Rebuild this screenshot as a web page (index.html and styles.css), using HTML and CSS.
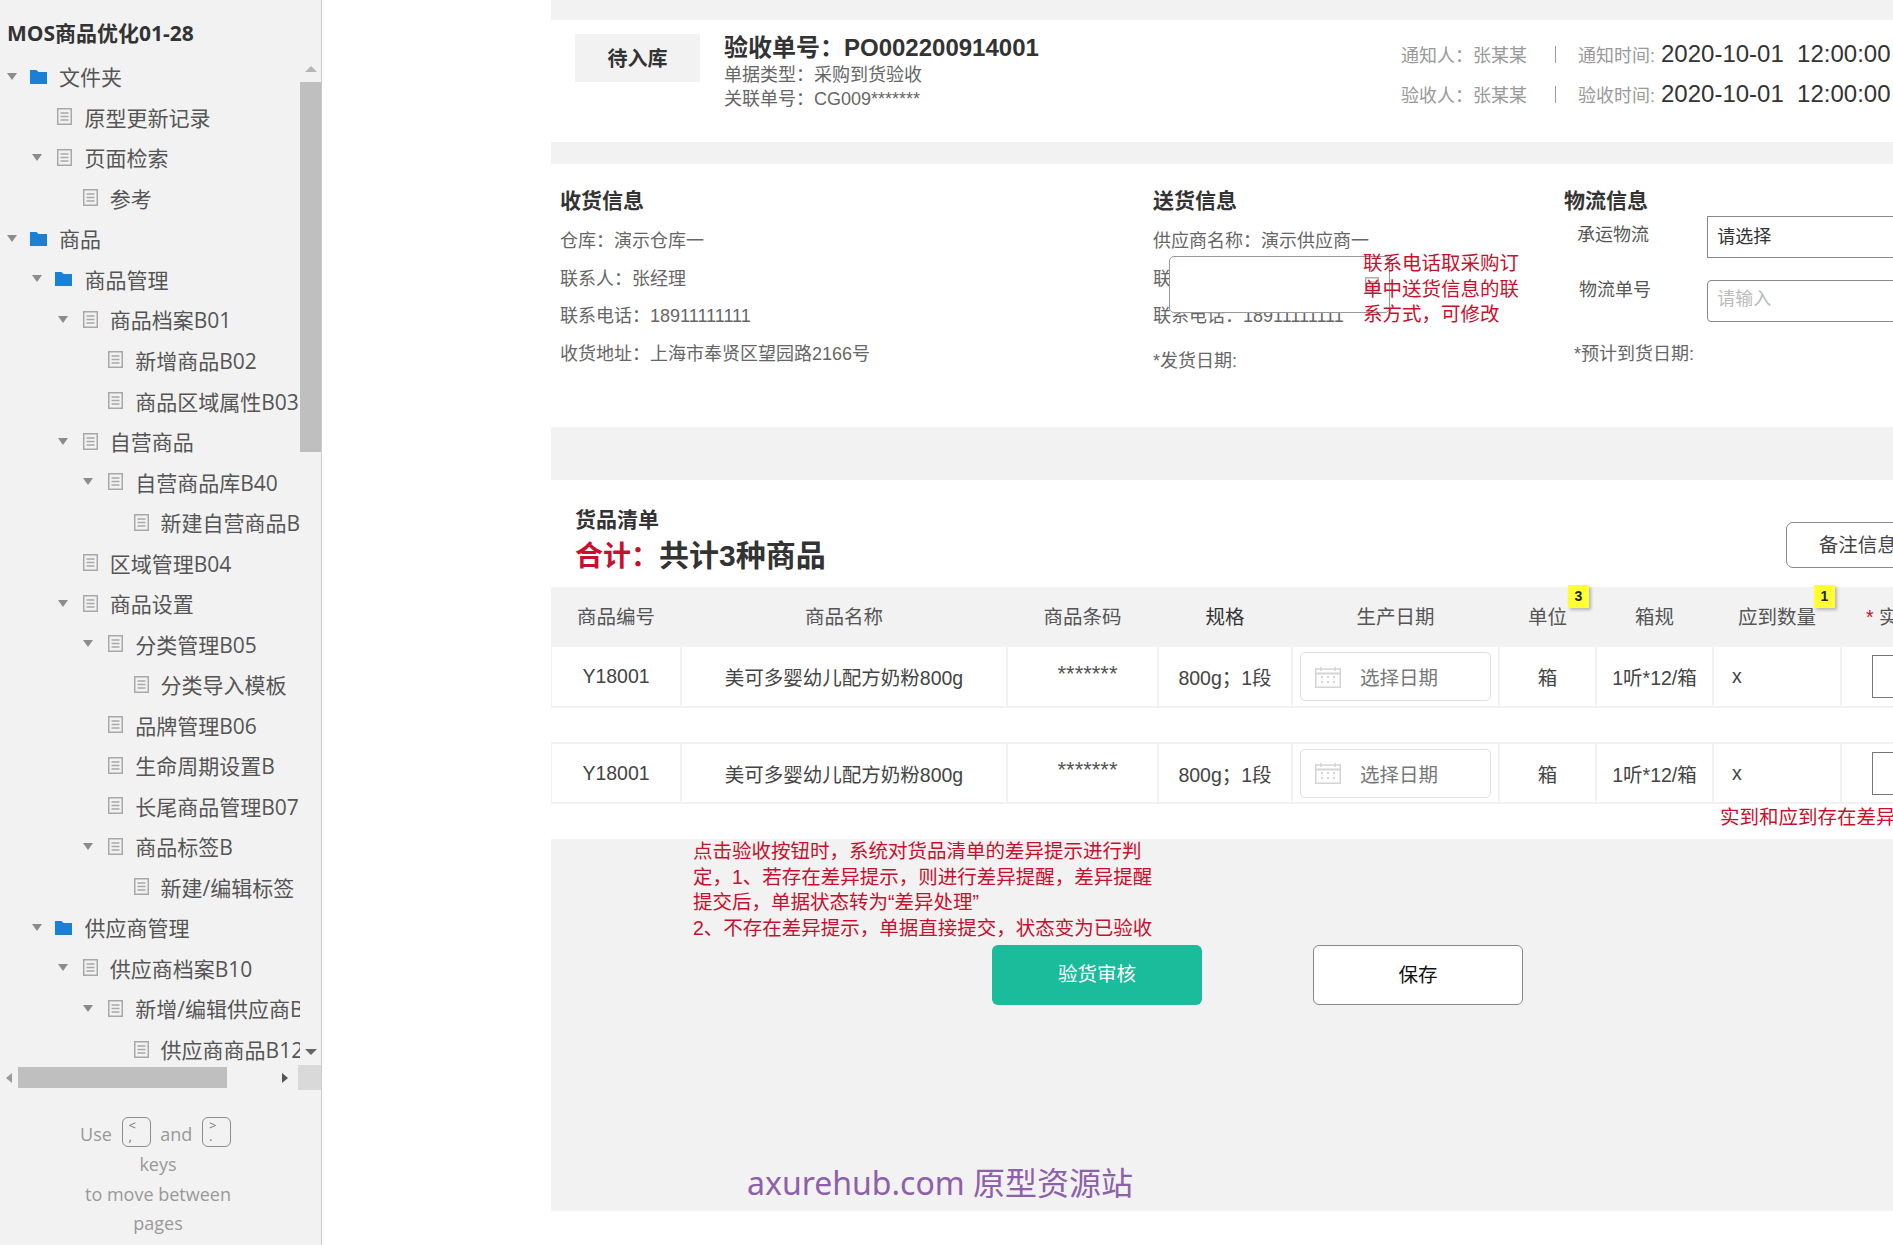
FILE: index.html
```html
<!DOCTYPE html>
<html>
	<head>
		<meta charset="utf-8">
		<link rel="stylesheet" href="styles.css">
	</head>
	<body>
		<svg class="sprite">
			<symbol id="docIcon" viewBox="0 0 15 17">
				<rect x="0.75" y="0.75" width="13.5" height="15.5" fill="none" stroke="#a8a8a8" stroke-width="1.5"/>
				<path d="M3.5 5h8M3.5 8.5h8M3.5 12h8" fill="none" stroke="#a8a8a8" stroke-width="1.3"/>
			</symbol>
			<symbol id="folderIcon" viewBox="0 0 17 15">
				<path d="M0 1h6.5l2 2H17v12H0z" fill="#1a80d6"/>
			</symbol>
			<symbol id="calIcon" viewBox="0 0 26 22">
				<rect x="0.75" y="3" width="24.5" height="18.25" fill="none" stroke="#d4d4d4" stroke-width="1.5"/>
				<path d="M1 7.5h24" stroke="#d4d4d4" stroke-width="2"/>
				<path d="M6 1v4M20 1v4" stroke="#d4d4d4" stroke-width="1.5"/>
				<path d="M6 11h2M12 11h2M18 11h2M6 16h2M12 16h2M18 16h2" stroke="#d4d4d4" stroke-width="2"/>
			</symbol>
		</svg>

		<aside class="sidebar">
			<div class="sideTitle">MOS商品优化01-28</div>

			<div class="treeBox">
				<div class="tree">
					<div class="treeRow lv0"><i class="arrow"></i><svg class="folderIco"><use href="#folderIcon"/></svg><span>文件夹</span></div>
					<div class="treeRow lv1"><i class="noArrow"></i><svg class="docIco"><use href="#docIcon"/></svg><span>原型更新记录</span></div>
					<div class="treeRow lv1"><i class="arrow"></i><svg class="docIco"><use href="#docIcon"/></svg><span>页面检索</span></div>
					<div class="treeRow lv2"><i class="noArrow"></i><svg class="docIco"><use href="#docIcon"/></svg><span>参考</span></div>
					<div class="treeRow lv0"><i class="arrow"></i><svg class="folderIco"><use href="#folderIcon"/></svg><span>商品</span></div>
					<div class="treeRow lv1"><i class="arrow"></i><svg class="folderIco"><use href="#folderIcon"/></svg><span>商品管理</span></div>
					<div class="treeRow lv2"><i class="arrow"></i><svg class="docIco"><use href="#docIcon"/></svg><span>商品档案B01</span></div>
					<div class="treeRow lv3"><i class="noArrow"></i><svg class="docIco"><use href="#docIcon"/></svg><span>新增商品B02</span></div>
					<div class="treeRow lv3"><i class="noArrow"></i><svg class="docIco"><use href="#docIcon"/></svg><span>商品区域属性B03</span></div>
					<div class="treeRow lv2"><i class="arrow"></i><svg class="docIco"><use href="#docIcon"/></svg><span>自营商品</span></div>
					<div class="treeRow lv3"><i class="arrow"></i><svg class="docIco"><use href="#docIcon"/></svg><span>自营商品库B40</span></div>
					<div class="treeRow lv4"><i class="noArrow"></i><svg class="docIco"><use href="#docIcon"/></svg><span>新建自营商品B</span></div>
					<div class="treeRow lv2"><i class="noArrow"></i><svg class="docIco"><use href="#docIcon"/></svg><span>区域管理B04</span></div>
					<div class="treeRow lv2"><i class="arrow"></i><svg class="docIco"><use href="#docIcon"/></svg><span>商品设置</span></div>
					<div class="treeRow lv3"><i class="arrow"></i><svg class="docIco"><use href="#docIcon"/></svg><span>分类管理B05</span></div>
					<div class="treeRow lv4"><i class="noArrow"></i><svg class="docIco"><use href="#docIcon"/></svg><span>分类导入模板</span></div>
					<div class="treeRow lv3"><i class="noArrow"></i><svg class="docIco"><use href="#docIcon"/></svg><span>品牌管理B06</span></div>
					<div class="treeRow lv3"><i class="noArrow"></i><svg class="docIco"><use href="#docIcon"/></svg><span>生命周期设置B</span></div>
					<div class="treeRow lv3"><i class="noArrow"></i><svg class="docIco"><use href="#docIcon"/></svg><span>长尾商品管理B07</span></div>
					<div class="treeRow lv3"><i class="arrow"></i><svg class="docIco"><use href="#docIcon"/></svg><span>商品标签B</span></div>
					<div class="treeRow lv4"><i class="noArrow"></i><svg class="docIco"><use href="#docIcon"/></svg><span>新建/编辑标签</span></div>
					<div class="treeRow lv1"><i class="arrow"></i><svg class="folderIco"><use href="#folderIcon"/></svg><span>供应商管理</span></div>
					<div class="treeRow lv2"><i class="arrow"></i><svg class="docIco"><use href="#docIcon"/></svg><span>供应商档案B10</span></div>
					<div class="treeRow lv3"><i class="arrow"></i><svg class="docIco"><use href="#docIcon"/></svg><span>新增/编辑供应商B</span></div>
					<div class="treeRow lv4"><i class="noArrow"></i><svg class="docIco"><use href="#docIcon"/></svg><span>供应商商品B12</span></div>
				</div>
				<div class="vBar">
					<div class="vBarEnd"><i class="triUp"></i></div>
					<div class="vThumb"></div>
					<div class="vBarFill"></div>
					<div class="vBarEnd"><i class="triDown"></i></div>
				</div>
			</div>

			<div class="hBar">
				<div class="hBarEnd"><i class="triLeft"></i></div>
				<div class="hThumb"></div>
				<div class="hBarFill"></div>
				<div class="hBarEnd"><i class="triRight"></i></div>
				<div class="hBarCorner"></div>
			</div>

			<div class="sideHint">
				<div>Use <span class="keyCap">&lt;<br>,</span> and <span class="keyCap">&gt;<br>.</span></div>
				<div>keys</div>
				<div>to move between</div>
				<div>pages</div>
			</div>
		</aside>

		<main class="main">
			<div class="page">
				<div class="band bandTop"></div>

				<section class="head">
					<div class="statusTag">待入库</div>
					<div class="headInfo">
						<div class="orderNo">验收单号：PO002200914001</div>
						<div class="orderSub">单据类型：采购到货验收</div>
						<div class="orderSub">关联单号：CG009*******</div>
					</div>
					<div class="headMeta">
						<div class="metaRow">
							<span class="metaWho">通知人：张某某</span>
							<span class="metaSep"></span>
							<span class="metaLabel">通知时间:</span>
							<span class="metaTime">2020-10-01&nbsp;&nbsp;12:00:00</span>
						</div>
						<div class="metaRow">
							<span class="metaWho">验收人：张某某</span>
							<span class="metaSep"></span>
							<span class="metaLabel">验收时间:</span>
							<span class="metaTime">2020-10-01&nbsp;&nbsp;12:00:00</span>
						</div>
					</div>
				</section>

				<div class="band bandMid"></div>

				<section class="info">
					<div class="infoCol colReceive">
						<h3 class="blockTitle">收货信息</h3>
						<div class="infoLines">
							<div>仓库：演示仓库一</div>
							<div>联系人：张经理</div>
							<div>联系电话：18911111111</div>
							<div>收货地址：上海市奉贤区望园路2166号</div>
						</div>
					</div>
					<div class="infoCol colSend">
						<h3 class="blockTitle">送货信息</h3>
						<div class="infoLines">
							<div>供应商名称：演示供应商一</div>
							<div>联系人：</div>
							<div>联系电话：18911111111</div>
							<div class="sendDate">*发货日期:</div>
						</div>
					</div>
					<div class="infoCol colShip">
						<h3 class="blockTitle">物流信息</h3>
						<div class="shipRow">
							<label class="shipLabel">承运物流</label>
							<div class="shipSelect">请选择</div>
						</div>
						<div class="shipRow shipRowNo">
							<label class="shipLabel">物流单号</label>
							<div class="shipInput">请输入</div>
						</div>
						<div class="shipEta">*预计到货日期:</div>
					</div>

					<div class="phonePop"><svg class="popCal"><use href="#docIcon"/></svg></div>
					<div class="redNote phoneNote">联系电话取采购订单中送货信息的联系方式，可修改</div>
				</section>

				<div class="band bandLow"></div>

				<section class="goods">
					<div class="goodsHead">
						<div>
							<h3 class="goodsTitle">货品清单</h3>
							<div class="goodsSum"><span class="sumRed">合计：</span>共计3种商品</div>
						</div>
						<div class="remarkBtn">备注信息</div>
					</div>

					<div class="tableRow tableHead">
						<div>商品编号</div>
						<div>商品名称</div>
						<div>商品条码</div>
						<div class="specHead">规格</div>
						<div>生产日期</div>
						<div class="hasBadge">单位<b class="badge">3</b></div>
						<div>箱规</div>
						<div class="hasBadge">应到数量<b class="badge">1</b></div>
						<div class="actualHead"><em>*</em> 实到数量</div>
					</div>

					<div class="tableRow tableBody">
						<div>Y18001</div>
						<div>美可多婴幼儿配方奶粉800g</div>
						<div class="stars">*******</div>
						<div>800g；1段</div>
						<div><div class="datePick"><svg class="calIco"><use href="#calIcon"/></svg>选择日期</div></div>
						<div>箱</div>
						<div>1听*12/箱</div>
						<div class="leftCell">x</div>
						<div class="leftCell"><div class="qtyBox"></div></div>
					</div>

					<div class="tableRow tableBody rowSecond">
						<div>Y18001</div>
						<div>美可多婴幼儿配方奶粉800g</div>
						<div class="stars">*******</div>
						<div>800g；1段</div>
						<div><div class="datePick"><svg class="calIco"><use href="#calIcon"/></svg>选择日期</div></div>
						<div>箱</div>
						<div>1听*12/箱</div>
						<div class="leftCell">x</div>
						<div class="leftCell"><div class="qtyBox"></div></div>
					</div>

					<div class="redNote diffNote">实到和应到存在差异</div>
				</section>

				<section class="actions">
					<div class="redNote auditNote">点击验收按钮时，系统对货品清单的差异提示进行判定，1、若存在差异提示，则进行差异提醒，差异提醒提交后，单据状态转为“差异处理”<br>2、不存在差异提示，单据直接提交，状态变为已验收</div>
					<div class="actionBtns">
						<div class="btn btnPrimary">验货审核</div>
						<div class="btn btnPlain">保存</div>
					</div>
					<div class="watermark">axurehub.com 原型资源站</div>
				</section>
			</div>
		</main>
	</body>
</html>
```

FILE: styles.css
```css
html, body {
	height: 100%;
	margin: 0;
}

body {
	display: flex;
	height: 1245px;
	overflow: hidden;
	background-color: #ffffff;
	color: #333333;
	font-family: "Liberation Sans", "Noto Sans CJK SC", sans-serif;
	font-size: 19.5px;
}

.sprite {
	display: none;
}

/* sidebar */

.sidebar {
	flex: 0 0 auto;
	box-sizing: border-box;
	width: 322px;
	height: 1245px;
	background-color: #f2f2f2;
	border-right: 1px solid #cccccc;
	font-family: "Open Sans", "Noto Sans CJK SC", sans-serif;
}

.sideTitle {
	height: 56px;
	padding: 18px 0 0 7px;
	box-sizing: border-box;
	font-size: 21px;
	line-height: 30px;
	font-weight: 700;
	color: #333333;
}

.treeBox {
	display: flex;
	height: 1009px;
}

.tree {
	width: 300px;
	overflow: hidden;
}

.treeRow {
	display: flex;
	align-items: center;
	height: 40.54px;
	font-size: 21px;
	color: #555555;
	white-space: nowrap;
}

.lv0 { padding-left: 7px; }
.lv1 { padding-left: 32.4px; }
.lv2 { padding-left: 57.8px; }
.lv3 { padding-left: 83.2px; }
.lv4 { padding-left: 108.6px; }

.arrow, .noArrow {
	flex: 0 0 auto;
	width: 23px;
}

.arrow::before {
	content: "";
	display: block;
	width: 0;
	height: 0;
	border-left: 5.5px solid transparent;
	border-right: 5.5px solid transparent;
	border-top: 7px solid #8c8c8c;
}

.docIco {
	flex: 0 0 auto;
	width: 15px;
	height: 17px;
	margin: 0 12px 0 2px;
}

.folderIco {
	flex: 0 0 auto;
	width: 17px;
	height: 15px;
	margin-right: 12px;
}

.vBar {
	display: flex;
	flex-direction: column;
	width: 21px;
}

.vBarEnd {
	display: flex;
	flex: 0 0 auto;
	align-items: center;
	justify-content: center;
	height: 26px;
}

.vThumb {
	flex: 0 0 auto;
	height: 370px;
	background-color: #bfbfbf;
}

.vBarFill, .hBarFill {
	flex: 1;
}

.triUp {
	border-left: 6px solid transparent;
	border-right: 6px solid transparent;
	border-bottom: 6px solid #b5b5b5;
}

.triDown {
	border-left: 6px solid transparent;
	border-right: 6px solid transparent;
	border-top: 6px solid #666666;
}

.hBar {
	display: flex;
	align-items: center;
	height: 25px;
}

.hBarEnd {
	flex: 0 0 auto;
	display: flex;
	justify-content: center;
	width: 18px;
}

.hThumb {
	flex: 0 0 auto;
	width: 209px;
	height: 21px;
	background-color: #bfbfbf;
}

.hBarCorner {
	flex: 0 0 auto;
	width: 23px;
	height: 25px;
	margin-left: 4px;
	background-color: #d9d9d9;
}

.triLeft {
	border-top: 5px solid transparent;
	border-bottom: 5px solid transparent;
	border-right: 6px solid #999999;
}

.triRight {
	border-top: 5px solid transparent;
	border-bottom: 5px solid transparent;
	border-left: 6px solid #555555;
}

.sideHint {
	width: 316px;
	margin-top: 27px;
	font-size: 18px;
	line-height: 29.8px;
	color: #999999;
	text-align: center;
}

.keyCap {
	display: inline-block;
	box-sizing: border-box;
	width: 29px;
	height: 30px;
	margin: 0 5px;
	padding: 2px 0 0 6px;
	border: 1px solid #8c8c8c;
	border-radius: 6px;
	font-size: 13px;
	line-height: 11px;
	text-align: left;
	vertical-align: 0;
	color: #777777;
}

/* main page */

.main {
	flex: 1;
	min-width: 0;
	overflow: hidden;
	padding-left: 229px;
}

.page {
	width: 1450px;
}

.band {
	background-color: #f2f2f2;
}

.bandTop { height: 20px; }
.bandMid { height: 22px; }
.bandLow { height: 53px; }

.head {
	display: flex;
	box-sizing: border-box;
	height: 122px;
	padding: 14px 0 0 24px;
}

.statusTag {
	flex: 0 0 auto;
	width: 125px;
	height: 48px;
	background-color: #f2f2f2;
	font-size: 20px;
	font-weight: 700;
	line-height: 50px;
	text-align: center;
}

.headInfo {
	flex: 0 0 auto;
	width: 677px;
	margin-left: 24px;
}

.orderNo {
	font-size: 24px;
	font-weight: 700;
	line-height: 28px;
}

.orderSub {
	font-size: 18px;
	line-height: 24px;
	color: #666666;
}

.orderNo + .orderSub {
	margin-top: 1px;
}

.metaRow {
	display: flex;
	align-items: center;
	height: 40px;
	font-size: 18px;
	color: #999999;
	white-space: nowrap;
}

.metaWho {
	width: 154px;
}

.metaSep {
	width: 1px;
	height: 17px;
	margin-right: 22px;
	background-color: #999999;
}

.metaLabel {
	width: 83px;
}

.metaTime {
	font-size: 24px;
	color: #333333;
}

.info {
	position: relative;
	display: flex;
	box-sizing: border-box;
	height: 263px;
	padding: 24px 0 0 9px;
	color: #666666;
	font-size: 18px;
}

.colReceive { width: 593px; }
.colSend { width: 411px; }
.colShip { width: 400px; }

.blockTitle {
	margin: 0;
	font-size: 21px;
	line-height: 26px;
	font-weight: 700;
	color: #333333;
}

.infoLines {
	margin-top: 9px;
	line-height: 37.5px;
}

.sendDate {
	padding-top: 7px;
}

.shipRow {
	display: flex;
	margin-top: 2px;
}

.shipRowNo {
	margin-top: 22px;
}

.shipLabel {
	width: 145px;
	padding-left: 13px;
	box-sizing: border-box;
	line-height: 38px;
	color: #555555;
}

.shipRowNo .shipLabel {
	padding-left: 15px;
	line-height: 20px;
}

.shipSelect, .shipInput {
	box-sizing: border-box;
	width: 260px;
	height: 42px;
	padding-left: 9px;
	border: 1px solid #888888;
	line-height: 40px;
}

.shipSelect {
	color: #333333;
}

.shipInput {
	border-radius: 4px;
	color: #bbbbbb;
	line-height: 36px;
}

.shipEta {
	margin-top: 20px;
	padding-left: 10px;
	line-height: 24px;
}

.phonePop {
	position: absolute;
	left: 618px;
	top: 92px;
	box-sizing: border-box;
	width: 221px;
	height: 57px;
	background-color: #ffffff;
	border: 1px solid #999999;
	border-radius: 5px;
}

.popCal {
	position: absolute;
	right: 10px;
	top: 18px;
	width: 14px;
	height: 20px;
}

.redNote {
	color: #c8102e;
	font-size: 19.5px;
	line-height: 25.6px;
}

.phoneNote {
	position: absolute;
	left: 812px;
	top: 87px;
	width: 160px;
}

.goods {
	height: 364px;
	box-sizing: border-box;
	padding-top: 27px;
}

.goodsHead {
	display: flex;
	height: 80px;
	padding-left: 24px;
}

.goodsTitle {
	margin: 0;
	font-size: 21px;
	line-height: 26px;
	font-weight: 700;
}

.goodsSum {
	margin-top: 2px;
	font-size: 30px;
	line-height: 42px;
	font-weight: 700;
	white-space: nowrap;
}

.sumRed {
	color: #c8102e;
	font-size: 28px;
}

.remarkBtn {
	box-sizing: border-box;
	width: 130px;
	height: 46px;
	margin: 15px 0 0 960px;
	padding-left: 32px;
	border: 1px solid #888888;
	border-radius: 7px;
	line-height: 44px;
	color: #444444;
}

.tableRow {
	display: grid;
	grid-template-columns: 130px 326px 151px 134px 207px 97px 117px 128px 160px;
}

.tableHead {
	height: 60px;
	background-color: #f2f2f2;
	color: #555555;
}

.tableHead > div {
	position: relative;
	line-height: 60px;
	text-align: center;
}

.specHead {
	color: #333333;
}

.tableHead .actualHead {
	padding-left: 25px;
	text-align: left;
	white-space: nowrap;
}

.actualHead em {
	color: #c8102e;
	font-style: normal;
}

.hasBadge {
	white-space: nowrap;
}

.badge {
	position: absolute;
	top: -2px;
	right: -2px;
	width: 21px;
	height: 23px;
	background-color: #ffff33;
	box-shadow: 2px 2px 3px rgba(0, 0, 0, 0.25);
	color: #222222;
	font-size: 14px;
	line-height: 23px;
	text-align: center;
}

.hasBadge:nth-child(6) .badge {
	right: 7px;
}

.hasBadge:nth-child(8) .badge {
	right: 6px;
}

.tableBody {
	height: 61px;
	box-sizing: border-box;
	border-bottom: 2px solid #f2f2f2;
	border-left: 1px solid #f2f2f2;
	color: #444444;
}

.tableBody > div {
	display: flex;
	align-items: center;
	justify-content: center;
	border-right: 2px solid #f2f2f2;
	box-sizing: border-box;
}

.tableBody > .leftCell {
	justify-content: flex-start;
	padding-left: 18px;
}

.tableBody > .leftCell:last-child {
	padding-left: 30px;
	border-right: 0;
}

.tableBody > .stars {
	padding: 0 0 6px 10px;
	font-size: 22px;
	color: #555555;
}

.rowSecond {
	height: 62px;
	margin-top: 34px;
	border-top: 2px solid #f2f2f2;
}

.datePick {
	display: flex;
	align-items: center;
	box-sizing: border-box;
	width: 191px;
	height: 49px;
	padding-left: 14px;
	border: 1px solid #e0e0e0;
	border-radius: 5px;
	color: #777777;
}

.calIco {
	width: 26px;
	height: 22px;
	margin-right: 19px;
}

.qtyBox {
	box-sizing: border-box;
	width: 80px;
	height: 43px;
	border: 1px solid #777777;
}

.diffNote {
	margin: 1px 0 0 1169px;
	white-space: nowrap;
}

.actions {
	height: 372px;
	background-color: #f2f2f2;
	overflow: visible;
}

.auditNote {
	width: 470px;
	margin: -5px 0 0 142px;
	position: relative;
}

.actionBtns {
	display: flex;
	gap: 111px;
	margin: 4px 0 0 441px;
}

.btn {
	box-sizing: border-box;
	width: 210px;
	height: 60px;
	border-radius: 6px;
	line-height: 58px;
	text-align: center;
}

.btnPrimary {
	background-color: #1abc9c;
	color: #ffffff;
}

.btnPlain {
	background-color: #ffffff;
	border: 1px solid #888888;
	color: #111111;
}

.watermark {
	margin: 156px 0 0 196px;
	font-family: "Noto Sans", "Noto Sans CJK SC", sans-serif;
	font-size: 32px;
	line-height: 44px;
	color: #8e5fab;
	white-space: nowrap;
}
```
